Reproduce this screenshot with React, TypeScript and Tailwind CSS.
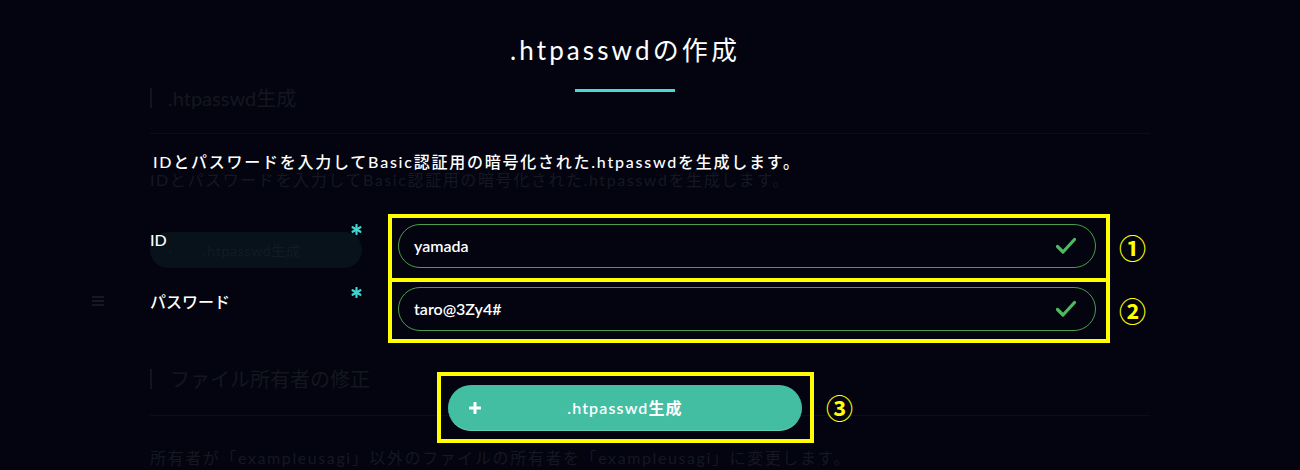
import React from "react";

const font = { fontFamily: "Lato, 'Noto Sans CJK JP', sans-serif" };
const cjk = { fontFamily: "'Noto Sans CJK JP', sans-serif" };

function CheckIcon() {
  return (
    <svg width="22" height="18" viewBox="0 0 22 18" fill="none">
      <path d="M2.5 9.5 L8 15 L19.5 2.5" stroke="#4dbb5d" strokeWidth="3.2" strokeLinecap="round" strokeLinejoin="round" />
    </svg>
  );
}

function Asterisk() {
  return (
    <svg width="11" height="11" viewBox="0 0 12 12" fill="none">
      <g stroke="#3fd6cf" strokeWidth="2.4" strokeLinecap="round">
        <path d="M6 1v10" />
        <path d="M1.7 3.5l8.6 5" />
        <path d="M1.7 8.5l8.6-5" />
      </g>
    </svg>
  );
}

function GhostPage() {
  return (
    <div className="flex h-[470px]">
      {/* sidebar */}
      <div className="w-[150px] shrink-0 pt-[296px] pl-[92px]">
        <div className="flex w-[12px] flex-col gap-[2px]">
          <div className="h-[2px] bg-[#151723]" />
          <div className="h-[2px] bg-[#151723]" />
          <div className="h-[2px] bg-[#151723]" />
        </div>
      </div>

      {/* main column */}
      <div className="flex w-[1000px] flex-col pt-[88px]">
        <div className="flex h-[20px] items-center gap-[16px]">
          <div className="h-[20px] w-[2px] bg-[#12151d]" />
          <span className="text-[20px] leading-[20px] text-[#14171f]">.htpasswd生成</span>
        </div>
        <div className="mt-[25px] h-px bg-[#0c0e17]" />
        <p className="mt-[34px] text-[16px] leading-[24px] tracking-[0.1em] text-[#151823]">
          IDとパスワードを入力してBasic認証用の暗号化された.htpasswdを生成します。
        </p>
        <div className="mt-[40px] flex h-[40px] w-[212px] items-center rounded-full bg-[#07121b] pl-[18px] text-[#111c25]">
          <span className="text-[14px]">›</span>
          <span className="flex-1 pr-[30px] text-center text-[14px] tracking-[0.05em]">.htpasswd生成</span>
        </div>
        <div className="mt-[101px] flex h-[20px] items-center gap-[18px]">
          <div className="h-[20px] w-[2px] bg-[#12151d]" />
          <span className="text-[20px] leading-[20px] text-[#14171f]">ファイル所有者の修正</span>
        </div>
        <div className="mt-[26px] h-px bg-[#0c0e17]" />
        <p className="mt-[30px] text-[16px] leading-[24px] tracking-[0.1em] text-[#151823]">
          所有者が「exampleusagi」以外のファイルの所有者を「exampleusagi」に変更します。
        </p>
      </div>
    </div>
  );
}

function FieldRow({
  label,
  value,
  num,
  first,
}: {
  label: string;
  value: string;
  num: string;
  first?: boolean;
}) {
  return (
    <div className={`flex items-start ${first ? "" : "-mt-[4px]"}`}>
      <div className={`flex w-[238px] shrink-0 justify-between pr-[26px] ${first ? "pt-[10px]" : "pt-[9px]"}`}>
        <span className={`text-[16px] font-medium leading-[24px] text-white ${first ? "mt-[4px]" : "mt-[3px]"}`}>
          {label}
        </span>
        <Asterisk />
      </div>
      <div
        className={`w-[722px] border-[4px] border-[#ffff00] pl-[6px] pr-[10px] ${
          first ? "h-[68px] pt-[6px]" : "h-[65px] pt-[5px]"
        }`}
      >
        <div className="flex h-[44px] items-center rounded-full border-[1.5px] border-[#4b9c4f] pl-[15px] pr-[18px]">
          <span className="flex-1 text-[16px] font-semibold text-white">{value}</span>
          <CheckIcon />
        </div>
      </div>
      <span className="ml-[9px] self-center text-[27px] font-bold leading-[30px] text-[#ffff00]" style={cjk}>
        {num}
      </span>
    </div>
  );
}

export default function App() {
  return (
    <div className="relative h-[470px] w-[1300px] overflow-hidden bg-[#03040f]" style={font}>
      <GhostPage />

      {/* modal overlay */}
      <div className="absolute inset-0 flex flex-col pt-[34px]">
        <div className="flex w-[1250px] flex-col items-center">
          <h1 className="text-[26px] leading-[32px] tracking-[0.12em] text-white">.htpasswdの作成</h1>
          <div className="mt-[23px] h-[3px] w-[100px] bg-[#46d9d6]" />
        </div>

        <div className="flex flex-col pl-[150px]">
          <p className="mt-[58px] pl-[3px] text-[16px] font-medium leading-[24px] tracking-[0.11em] text-white">
            IDとパスワードを入力してBasic認証用の暗号化された.htpasswdを生成します。
          </p>

          <div className="mt-[40px] flex flex-col">
            <FieldRow label="ID" value="yamada" num="①" first />
            <FieldRow label="パスワード" value="taro@3Zy4#" num="②" />
          </div>

          <div className="mt-[29px] flex items-center pl-[287px]">
            <div className="h-[71px] w-[377px] border-[4px] border-[#ffff00] pl-[7px] pr-[8px] pt-[9px]">
              <button className="relative flex h-[46px] w-full items-center justify-center rounded-full border-b-[1.5px] border-[#5ed3b8] bg-[#43bea3] text-white">
                <svg className="absolute left-[21px]" width="12" height="12" viewBox="0 0 12 12">
                  <path d="M6 1v10M1 6h10" stroke="#fff" strokeWidth="3" strokeLinecap="round" />
                </svg>
                <span className="text-[16px] font-semibold tracking-[0.07em]">.htpasswd生成</span>
              </button>
            </div>
            <span className="ml-[12px] text-[27px] font-bold leading-[30px] text-[#ffff00]" style={cjk}>
              ③
            </span>
          </div>
        </div>
      </div>
    </div>
  );
}
